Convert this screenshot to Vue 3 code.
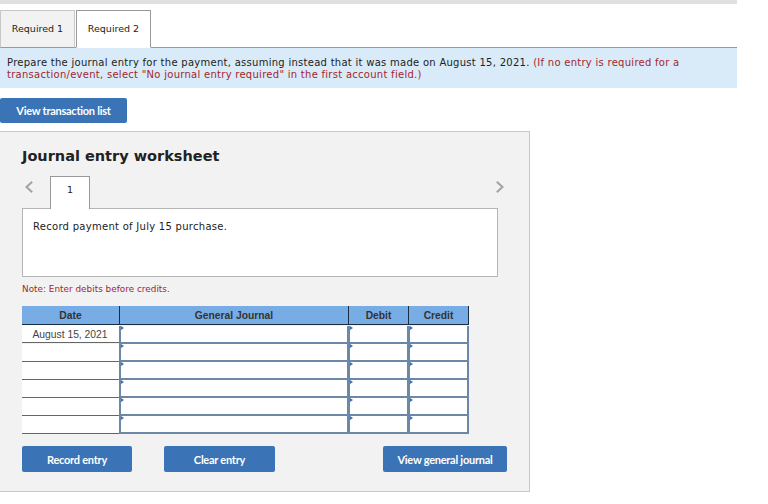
<template>
  <div class="page">
    <div class="top-bar"></div>
    <div class="tabs">
      <div class="tab">Required 1</div>
      <div class="tab active">Required 2</div>
    </div>
    <div class="prompt">
      Prepare the journal entry for the payment, assuming instead that it was made on August 15, 2021.
      <span class="red">(If no entry is required for a transaction/event, select "No journal entry required" in the first account field.)</span>
    </div>
    <button class="btn list-btn">View transaction list</button>

    <div class="panel">
      <h2>Journal entry worksheet</h2>
      <div class="pager">
        <svg class="arrow" width="8" height="12" viewBox="0 0 8 12">
          <path d="M7.200 .8 1.500 6l5.700 5.200" fill="none" stroke="#a3a3a3" stroke-width="2" />
        </svg>
        <div class="page-tab">1</div>
        <svg class="arrow next" width="8" height="12" viewBox="0 0 8 12">
          <path d="M.8 .8 6.500 6 .8 11.200" fill="none" stroke="#a3a3a3" stroke-width="2" />
        </svg>
      </div>
      <div class="desc">Record payment of July 15 purchase.</div>
      <div class="note">Note: Enter debits before credits.</div>

      <div class="journal">
        <div class="head">Date</div>
        <div class="head">General Journal</div>
        <div class="head">Debit</div>
        <div class="head">Credit</div>
        <template v-for="(row, i) in rows" :key="i">
          <div class="date" :class="{ first: i === 0 }">{{ row }}</div>
          <div class="input"></div>
          <div class="input"></div>
          <div class="input"></div>
        </template>
      </div>

      <div class="actions">
        <button class="btn record">Record entry</button>
        <button class="btn clear">Clear entry</button>
        <button class="btn general">View general journal</button>
      </div>
    </div>
  </div>
</template>

<script setup>
const rows = ["August 15, 2021", "", "", "", "", ""];
</script>

<style scoped>
.page {
  width: 768px;
  height: 504px;
  overflow: hidden;
  background: #fff;
  font-family: "DejaVu Sans", Verdana, sans-serif;
  font-size: 9.5px;
  color: #222;
}

.top-bar {
  width: 737px;
  height: 4px;
  background: #e0e0e0;
}

.tabs {
  display: flex;
  gap: 1px;
  width: 737px;
  height: 38px;
  margin-top: 6px;
  box-sizing: border-box;
  border-bottom: 1px solid #999;
}

.tab {
  width: 75px;
  height: 38px;
  box-sizing: border-box;
  border: 1px solid #c8c8c8;
  border-bottom: 1px solid #999;
  background: #f2f2f2;
  line-height: 36px;
  text-align: center;
}

.tab.active {
  background: #fff;
  border-color: #999;
  border-bottom-color: #fff;
}

.prompt {
  width: 737px;
  height: 40px;
  box-sizing: border-box;
  padding: 9px 50px 0 7px;
  background: #d9ebf9;
  font-size: 10px;
  letter-spacing: 0.275px;
  line-height: 12px;
}

.red {
  color: #a4262c;
}

.btn {
  display: block;
  border: 0;
  border-radius: 2px;
  background: #3a74b7;
  color: #fff;
  font-family: Lato, sans-serif;
  font-size: 11px;
  font-weight: 700;
  letter-spacing: -0.25px;
  text-align: center;
  padding: 0;
}

.list-btn {
  width: 127px;
  height: 25px;
  margin-top: 10px;
  padding-bottom: 1px;
}

.panel {
  width: 530px;
  height: 361px;
  margin-top: 8px;
  box-sizing: border-box;
  padding: 0 31px 0 22px;
  background: #f2f2f2;
  border: 1px solid #c8c8c8;
  border-left: 0;
}

h2 {
  margin: 0;
  padding-top: 15px;
  font-size: 14.5px;
  line-height: 18px;
  font-weight: 700;
  color: #222;
}

.pager {
  display: flex;
  align-items: flex-start;
  height: 32px;
  margin-top: 11px;
  position: relative;
}

.arrow {
  margin: 5px 0 0 3px;
}

.arrow.next {
  position: absolute;
  right: -6px;
  top: 0;
  margin: 5px 0 0;
}

.page-tab {
  width: 40px;
  height: 33px;
  margin-left: 17px;
  box-sizing: border-box;
  border: 1px solid #999;
  border-bottom: 0;
  background: #fff;
  text-align: center;
  line-height: 26px;
  position: relative;
  z-index: 1;
}

.desc {
  height: 69px;
  box-sizing: border-box;
  padding: 11px 10px;
  background: #fff;
  border: 1px solid #b5b5b5;
  font-size: 10px;
  letter-spacing: 0.28px;
  line-height: 14px;
}

.note {
  margin-top: 6px;
  height: 12px;
  font-size: 8.9px;
  line-height: 12px;
  color: #a4262c;
}

.journal {
  display: grid;
  grid-template-columns: 98px 229px 60px 60px;
  grid-template-rows: 20px;
  grid-auto-rows: 18px;
  width: 447px;
  margin-top: 11px;
  font-family: "Liberation Sans", Arial, sans-serif;
  font-size: 10.3px;
}

.head {
  height: 19px;
  box-sizing: border-box;
  background: #78ace4;
  border-right: 1px solid #1a2c44;
  border-bottom: 1px solid #1a2c44;
  color: #333;
  font-weight: 700;
  line-height: 20px;
  text-align: center;
}

.date {
  background: #fff;
  border-bottom: 1px solid #666;
  box-sizing: border-box;
  color: #444;
  line-height: 19px;
  text-align: center;
}

.date.first {
  height: 18px;
  margin-top: -1px;
  align-self: start;
  padding-right: 2px;
}

.input {
  margin-left: -1px;
  box-sizing: border-box;
  background: #fff;
  border: solid #6d87a6;
  border-width: 0 2px 2px 2px;
  position: relative;
}

/* little blue flag in the corner of every entry cell */
.input::before {
  content: "";
  position: absolute;
  left: 0;
  top: 0;
  border-left: 3px solid #3a74b7;
  border-top: 2.500px solid transparent;
  border-bottom: 2.500px solid transparent;
}

.actions {
  display: flex;
  width: 485px;
  margin-top: 12px;
}

.actions .btn {
  height: 26px;
}

.record {
  width: 110px;
}

.clear {
  width: 111px;
  margin-left: 32px;
}

.general {
  width: 124px;
  margin-left: auto;
}
</style>
